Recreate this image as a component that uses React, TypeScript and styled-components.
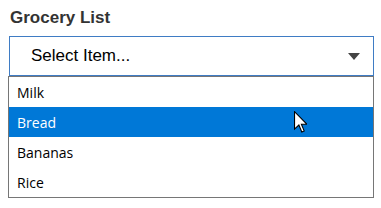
import styled, { createGlobalStyle } from "styled-components";

const GlobalStyle = createGlobalStyle`
  html, body {
    margin: 0;
    padding: 0;
    background: #ffffff;
  }
`;

const items = ["Milk", "Bread", "Bananas", "Rice"];

const App = () => {
  return (
    <Page>
      <GlobalStyle />
      <Title>Grocery List</Title>
      <Field>
        <SelectBox>
          <span>Select Item...</span>
          <Caret />
        </SelectBox>
        <OptionList>
          {items.map(item => (
            <Option key={item} $active={item === "Bread"}>
              {item}
            </Option>
          ))}
        </OptionList>
        <Pointer viewBox="0 0 12 20" width="13" height="22">
          <path
            d="M0.5 0.5 L0.5 16.5 L4.5 12.8 L7.2 19.2 L9.4 18.2 L6.8 12 L11.8 12 Z"
            fill="#ffffff"
            stroke="#000000"
            strokeWidth="1"
            strokeLinejoin="miter"
          />
        </Pointer>
      </Field>
    </Page>
  );
};

export default App;

const Page = styled.div`
  position: relative;
  width: 381px;
  height: 208px;
  padding: 8px 0 0 8px;
  box-sizing: border-box;
`;

const Title = styled.div`
  margin-left: 2px;
  font-family: "Liberation Sans", Arial, sans-serif;
  font-weight: bold;
  font-size: 17px;
  line-height: 20px;
  color: #333333;
`;

const Field = styled.div`
  position: relative;
  margin-top: 8px;
  width: 366px;
`;

const SelectBox = styled.div`
  display: flex;
  align-items: center;
  justify-content: space-between;
  margin-left: 1px;
  height: 40px;
  box-sizing: border-box;
  padding: 0 13px 0 21px;
  border: 1px solid #3f7cc4;
  font-family: "Liberation Sans", Arial, sans-serif;
  font-size: 17px;
  color: #000000;
`;

const Caret = styled.span`
  width: 0;
  height: 0;
  border-left: 6px solid transparent;
  border-right: 6px solid transparent;
  border-top: 7px solid #444444;
`;

const OptionList = styled.ul`
  list-style: none;
  margin: 0;
  padding: 0;
  border: 1px solid #767676;
  font-family: "Open Sans", "Segoe UI", sans-serif;
  font-size: 14px;
`;

const Option = styled.li<{ $active: boolean }>`
  height: 30px;
  display: flex;
  align-items: center;
  padding-left: 8px;
  background: ${({ $active }) => ($active ? "#0078d7" : "#ffffff")};
  color: ${({ $active }) => ($active ? "#ffffff" : "#000000")};
`;

const Pointer = styled.svg`
  position: absolute;
  left: 286px;
  top: 75px;
`;
